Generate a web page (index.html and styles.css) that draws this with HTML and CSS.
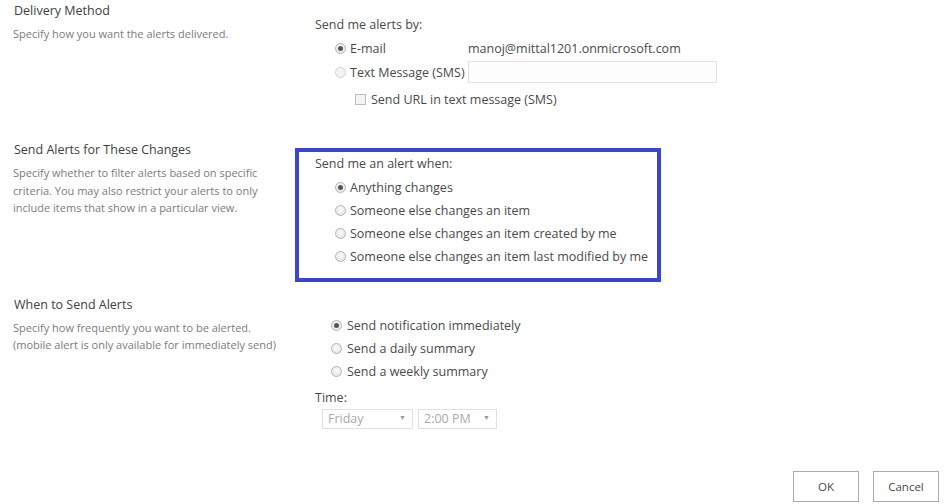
FILE: index.html
```html
<!DOCTYPE html>
<html>
<head>
<meta charset="utf-8">
<link rel="stylesheet" href="styles.css">
</head>
<body>
<div class="form">
  <section class="section s1">
    <div class="info">
      <div class="title">Delivery Method</div>
      <div class="desc">Specify how you want the alerts delivered.</div>
    </div>
    <div class="field">
      <div class="label">Send me alerts by:</div>
      <div class="opts">
        <div class="row"><span class="radio on"></span><span class="opt-text w-email">E-mail</span><span class="email">manoj@mittal1201.onmicrosoft.com</span></div>
        <div class="row"><span class="radio dis"></span><span class="opt-text w-email">Text Message (SMS)</span><span class="textbox"></span></div>
        <div class="row sub"><span class="check"></span><span class="opt-text">Send URL in text message (SMS)</span></div>
      </div>
    </div>
  </section>
  <section class="section s2">
    <div class="info">
      <div class="title">Send Alerts for These Changes</div>
      <div class="desc">Specify whether to filter alerts based on specific criteria. You may also restrict your alerts to only include items that show in a particular view.</div>
    </div>
    <div class="field">
      <div class="highlight">
        <div class="label">Send me an alert when:</div>
        <div class="opts list">
          <div class="row"><span class="radio on"></span><span class="opt-text">Anything changes</span></div>
          <div class="row"><span class="radio"></span><span class="opt-text">Someone else changes an item</span></div>
          <div class="row"><span class="radio"></span><span class="opt-text">Someone else changes an item created by me</span></div>
          <div class="row"><span class="radio"></span><span class="opt-text">Someone else changes an item last modified by me</span></div>
        </div>
      </div>
    </div>
  </section>
  <section class="section s3">
    <div class="info">
      <div class="title">When to Send Alerts</div>
      <div class="desc nowrap">Specify how frequently you want to be alerted.<br>(mobile alert is only available for immediately send)</div>
    </div>
    <div class="field">
      <div class="opts freq">
        <div class="row"><span class="radio on"></span><span class="opt-text">Send notification immediately</span></div>
        <div class="row"><span class="radio"></span><span class="opt-text">Send a daily summary</span></div>
        <div class="row"><span class="radio"></span><span class="opt-text">Send a weekly summary</span></div>
      </div>
      <div class="label time">Time:</div>
      <div class="selects">
        <span class="select day">Friday<span class="arrow">&#9660;</span></span>
        <span class="select hour">2:00 PM<span class="arrow">&#9660;</span></span>
      </div>
    </div>
  </section>
  <div class="buttons">
    <span class="btn">OK</span>
    <span class="btn">Cancel</span>
  </div>
</div>
</body>
</html>
```
FILE: styles.css
```css
* { box-sizing: border-box; }
html, body { margin: 0; padding: 0; background: #fff; }
body {
  width: 946px;
  height: 504px;
  overflow: hidden;
  font-family: "Open Sans", "Noto Sans", sans-serif;
  font-size: 12.5px;
  color: #4a4a4a;
}
.form { padding-left: 13px; }
.section {
  display: grid;
  grid-template-columns: 302px 1fr;
}
.title {
  font-size: 12.5px;
  line-height: 20px;
  color: #3e3e3e;
  padding-left: 1px;
  margin-top: 1px;
}
.desc {
  font-size: 11px;
  line-height: 17.5px;
  color: #7c7c7c;
  margin-top: 4px;
  max-width: 262px;
}
.desc.nowrap { max-width: none; white-space: nowrap; line-height: 17px; }
.label { line-height: 20px; color: #4a4a4a; }
.row {
  display: flex;
  align-items: center;
  height: 24px;
  color: #4a4a4a;
}
.radio {
  width: 11px;
  height: 11px;
  border-radius: 50%;
  border: 1px solid #b4b4b4;
  background: radial-gradient(circle at 50% 40%, #fafafa, #e2e2e2);
  position: relative;
  flex: none;
  margin-right: 4px;
}
.radio.on::after {
  content: "";
  position: absolute;
  left: 2px; top: 2px;
  width: 5px; height: 5px;
  border-radius: 50%;
  background: #555;
}
.radio.dis { border-color: #d0d0d0; background: #f3f3f3; }
.check {
  width: 11px; height: 11px;
  border: 1px solid #bdbdbd;
  background: #f4f4f4;
  margin-right: 5px;
  flex: none;
}

/* section 1 */
.s1 { height: 139px; }
.s1 .field { padding-top: 15px; }
.s1 .opts { padding-left: 20px; margin-top: 1px; }
.s1 .w-email { width: 118px; }
.email { color: #4a4a4a; }
.textbox {
  width: 249px;
  height: 22px;
  border: 1px solid #e1e1e1;
  background: #fdfdfd;
}
.s1 .row.sub { padding-left: 20px; height: 30px; }

/* section 2 */
.s2 { height: 155px; }
.s2 .field { padding-top: 9px; margin-left: -20px; }
.highlight {
  width: 366px;
  height: 134px;
  border: 4px solid #3d45c9;
  padding: 1px 0 0 16px;
}
.highlight .label { line-height: 22px; }
.list { padding-left: 20px; margin-top: 1px; }
.list .row { height: 23px; }

/* section 3 */
.s3 { height: 160px; }
.s3 .field { padding-top: 20px; }
.freq { padding-left: 16px; }
.freq .row { height: 23px; }
.freq .radio { margin-right: 5px; }
.time { margin-top: 5px; }
.selects { display: flex; gap: 5px; padding-left: 7px; margin-top: 1px; }
.select {
  height: 20px;
  border: 1px solid #e1e1e1;
  color: #aaa;
  padding-left: 5px;
  line-height: 18px;
  display: flex;
  justify-content: space-between;
}
.select .arrow { font-size: 7px; color: #999; padding-right: 6px; line-height: 16px; }
.day { width: 91px; }
.hour { width: 79px; }

.buttons {
  display: flex;
  justify-content: flex-end;
  gap: 14px;
  padding-right: 7px;
  margin-top: 17px;
}
.btn {
  width: 66px;
  height: 31px;
  border: 1px solid #ababab;
  display: flex;
  align-items: center;
  justify-content: center;
  color: #4a4a4a;
  font-size: 11.5px;
}
```
